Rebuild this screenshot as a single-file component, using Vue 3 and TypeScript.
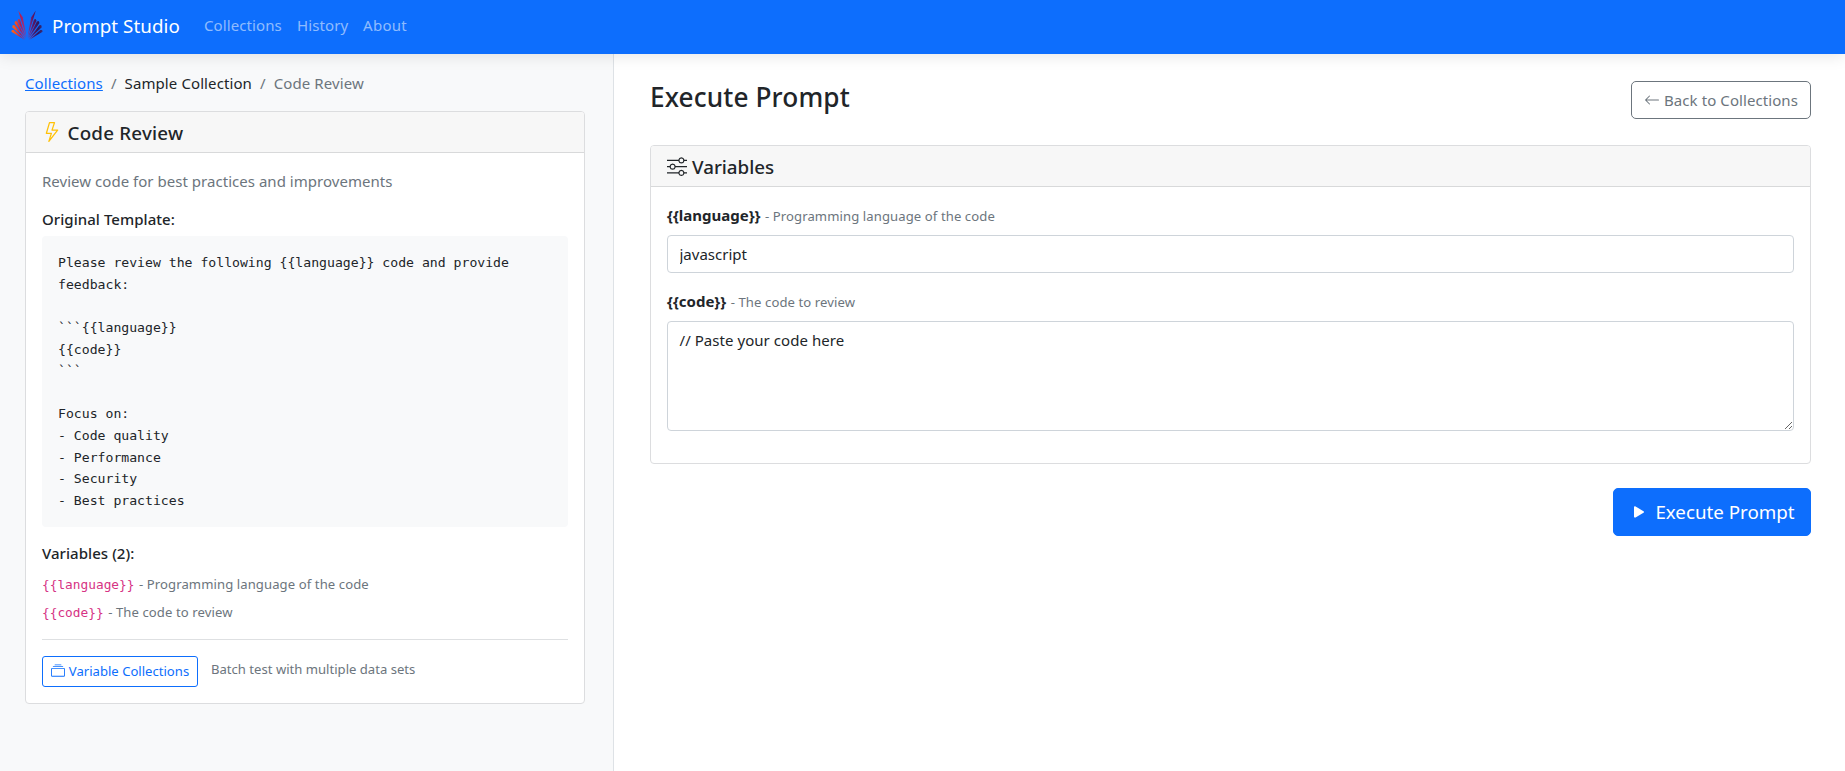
<script setup lang="ts">
import { ref } from 'vue'

interface Variable {
  name: string
  description: string
}

const navLinks: string[] = ['Collections', 'History', 'About']

const variables: Variable[] = [
  { name: 'language', description: 'Programming language of the code' },
  { name: 'code', description: 'The code to review' },
]

const token = (name: string): string => '{{' + name + '}}'

const template = [
  'Please review the following {{language}} code and provide feedback:',
  '',
  '```{{language}}',
  '{{code}}',
  '```',
  '',
  'Focus on:',
  '- Code quality',
  '- Performance',
  '- Security',
  '- Best practices',
].join('\n')

const language = ref('javascript')
const code = ref('// Paste your code here')
</script>

<template>
  <div class="page">
    <nav class="navbar">
      <a class="brand">
        <svg class="logo" viewBox="0 0 32 32" width="32" height="32">
          <defs>
            <linearGradient id="fan" gradientUnits="userSpaceOnUse" x1="0" y1="0" x2="32" y2="0">
              <stop offset="0" stop-color="#ff6a13" />
              <stop offset="0.16" stop-color="#f04a28" />
              <stop offset="0.3" stop-color="#b01c58" />
              <stop offset="0.5" stop-color="#8a3a9a" />
              <stop offset="0.7" stop-color="#5a1462" />
              <stop offset="0.85" stop-color="#2c1660" />
              <stop offset="1" stop-color="#3a2f7a" />
            </linearGradient>
          </defs>
          <g fill="url(#fan)">
            <path d="M14 30 0.4 21.8 0.9 19.9 2.6 20.1Z" />
            <path d="M14.4 29.4 1.2 17.3 1.8 15.1 3.6 15.2Z" />
            <path d="M14.8 28.8 3.5 13.1 4.3 10.9 6.1 11.4Z" />
            <path d="M15.2 28.2 6.5 10.7 7.3 8.9 8.9 9.6Z" />
            <path d="M15.6 27.5 9.7 8.8 7.2 0.6 11.8 7.2Z" />
            <path d="M18 30 31.6 21.8 31.1 19.9 29.4 20.1Z" />
            <path d="M17.6 29.4 30.8 17.3 30.2 15.1 28.4 15.2Z" />
            <path d="M17.2 28.8 28.5 13.1 27.7 10.9 25.9 11.4Z" />
            <path d="M16.8 28.2 25.5 10.7 24.7 8.9 23.1 9.6Z" />
            <path d="M16.4 27.5 22.3 8.8 24.8 0.6 20.2 7.2Z" />
          </g>
        </svg>
        <span class="brand-name">Prompt Studio</span>
      </a>
      <a v-for="(link, i) in navLinks" :key="link" class="nav-link" :class="`nav-${i}`">{{ link }}</a>
    </nav>

    <div class="content">
      <aside class="sidebar">
        <div class="breadcrumb">
          <a class="crumb-link">Collections</a>
          <span class="sep">/</span>
          <span class="crumb-mid">Sample Collection</span>
          <span class="sep">/</span>
          <span class="crumb-end">Code Review</span>
        </div>

        <section class="card">
          <header class="card-header">
            <svg class="bolt" viewBox="0 0 16 16" width="20" height="20" fill="currentColor">
              <path d="M5.52.359A.5.5 0 0 1 6 0h4a.5.5 0 0 1 .474.658L8.694 6H12.5a.5.5 0 0 1 .395.807l-7 9a.5.5 0 0 1-.873-.454L6.823 9.5H3.5a.5.5 0 0 1-.48-.641zM6.374 1 4.168 8.5H7.5a.5.5 0 0 1 .478.647L6.78 13.04 11.478 7H8a.5.5 0 0 1-.474-.658L9.306 1z" />
            </svg>
            <h5 class="title-review">Code Review</h5>
          </header>
          <div class="card-body">
            <p class="description">Review code for best practices and improvements</p>
            <h6 class="h-template">Original Template:</h6>
            <pre class="template">{{ template }}</pre>
            <h6 class="h-vars">Variables (2):</h6>
            <div v-for="v in variables" :key="v.name" class="var-row">
              <code>{{ token(v.name) }}</code>
              <small> - {{ v.description }}</small>
            </div>
            <hr />
            <div class="actions">
              <button class="btn btn-small">
                <svg viewBox="0 0 16 16" width="14" height="14" fill="currentColor">
                  <path d="M2.5 3.5a.5.5 0 0 1 0-1h11a.5.5 0 0 1 0 1zm2-2a.5.5 0 0 1 0-1h7a.5.5 0 0 1 0 1zM0 13a1.5 1.5 0 0 0 1.5 1.5h13A1.5 1.5 0 0 0 16 13V6a1.5 1.5 0 0 0-1.5-1.5h-13A1.5 1.5 0 0 0 0 6zm1.5.5A.5.5 0 0 1 1 13V6a.5.5 0 0 1 .5-.5h13a.5.5 0 0 1 .5.5v7a.5.5 0 0 1-.5.5z" />
                </svg>
                <span>Variable Collections</span>
              </button>
              <small class="hint">Batch test with multiple data sets</small>
            </div>
          </div>
        </section>
      </aside>

      <main class="main">
        <div class="heading">
          <h3>Execute Prompt</h3>
          <button class="btn btn-back">
            <svg viewBox="0 0 16 16" width="16" height="16" fill="currentColor">
              <path fill-rule="evenodd" d="M15 8a.5.5 0 0 0-.5-.5H2.707l3.147-3.146a.5.5 0 1 0-.708-.708l-4 4a.5.5 0 0 0 0 .708l4 4a.5.5 0 0 0 .708-.708L2.707 8.5H14.5A.5.5 0 0 0 15 8" />
            </svg>
            <span>Back to Collections</span>
          </button>
        </div>

        <section class="card">
          <header class="card-header">
            <svg class="sliders" viewBox="0 0 16 16" width="20" height="20" fill="currentColor">
              <path fill-rule="evenodd" d="M11.5 2a1.5 1.5 0 1 0 0 3 1.5 1.5 0 0 0 0-3M9.05 3a2.5 2.5 0 0 1 4.9 0H16v1h-2.05a2.5 2.5 0 0 1-4.9 0H0V3zM4.5 7a1.5 1.5 0 1 0 0 3 1.5 1.5 0 0 0 0-3M2.05 8a2.5 2.5 0 0 1 4.9 0H16v1H6.95a2.5 2.5 0 0 1-4.9 0H0V8zm9.45 4a1.5 1.5 0 1 0 0 3 1.5 1.5 0 0 0 0-3m-2.45 1a2.5 2.5 0 0 1 4.9 0H16v1h-2.05a2.5 2.5 0 0 1-4.9 0H0v-1z" />
            </svg>
            <h5 class="title-vars">Variables</h5>
          </header>
          <div class="card-body">
            <div class="field">
              <label><strong>{{ token(variables[0].name) }}</strong><small> - {{ variables[0].description }}</small></label>
              <input v-model="language" type="text" />
            </div>
            <div class="field">
              <label><strong>{{ token(variables[1].name) }}</strong><small> - {{ variables[1].description }}</small></label>
              <textarea v-model="code" rows="4" spellcheck="false"></textarea>
            </div>
          </div>
        </section>

        <div class="submit">
          <button class="btn btn-run">
            <svg viewBox="0 0 16 16" width="20" height="20" fill="currentColor">
              <path d="m11.596 8.697-6.363 3.692c-.54.313-1.233-.066-1.233-.697V4.308c0-.63.692-1.01 1.233-.696l6.363 3.692a.802.802 0 0 1 0 1.393" />
            </svg>
            <span>Execute Prompt</span>
          </button>
        </div>
      </main>
    </div>
  </div>
</template>

<style>
body {
  margin: 0;
  background: #fff;
}
</style>

<style scoped>
.page,
.page * {
  box-sizing: border-box;
}

.page {
  display: flex;
  flex-direction: column;
  height: 771px;
  overflow: hidden;
  font-family: 'Noto Sans', 'Open Sans', sans-serif;
  font-size: 15px;
  line-height: 24px;
  color: #212529;
}

svg {
  display: block;
  flex: none;
}

h3,
h5,
h6,
p,
pre {
  margin: 0;
  font-weight: 550;
}

p,
pre {
  font-weight: 400;
}

button,
input,
textarea {
  font: inherit;
  color: inherit;
}

.navbar {
  position: relative;
  z-index: 1;
  display: flex;
  align-items: center;
  flex: none;
  height: 54px;
  padding: 0 11px 3px;
  background: #0d6efd;
  box-shadow: 0 2px 15px rgba(0, 0, 0, 0.1);
}

.brand {
  display: flex;
  align-items: center;
  gap: 9px;
  width: 193px;
  color: #fff;
  font-size: 18.75px;
  letter-spacing: 0.05px;
  line-height: 30px;
}

.nav-link {
  padding-bottom: 1px;
  color: rgba(255, 255, 255, 0.55);
  letter-spacing: 0.1px;
  white-space: nowrap;
}

.nav-0 {
  width: 93px;
}

.nav-1 {
  width: 66px;
}

.nav-2 {
  letter-spacing: 0.3px;
}

.content {
  display: flex;
  flex: 1;
  min-height: 0;
}

.sidebar {
  flex: none;
  width: 614px;
  padding: 17px 28px 0 25px;
  background: #f8f9fa;
  border-right: 1px solid #dee2e6;
}

.breadcrumb {
  display: flex;
  gap: 8px;
  margin-bottom: 16px;
  letter-spacing: 0.1px;
}

.crumb-link {
  color: #0d6efd;
  text-decoration: underline;
}

.sep,
.crumb-end {
  color: #6c757d;
}

.card {
  background: #fff;
  border: 1px solid #dcdddf;
  border-radius: 4px;
}

.card-header {
  display: flex;
  align-items: center;
  height: 41px;
  padding: 0 16px;
  background: #f7f7f7;
  border-bottom: 1px solid #d8d9da;
  border-radius: 3px 3px 0 0;
}

.card-header h5 {
  padding-top: 1px;
  font-size: 18.75px;
  line-height: 24px;
}

.title-review {
  letter-spacing: 0.22px;
}

.bolt {
  margin-right: 5.5px;
  color: #ffc107;
}

.sliders {
  margin-right: 5px;
}

.card-body {
  padding: 16px;
}

.description {
  margin-bottom: 17px;
  color: #6c757d;
  letter-spacing: 0.03px;
}

h6 {
  margin-bottom: 7px;
  font-size: 15px;
  line-height: 19.2px;
  letter-spacing: 0.05px;
}

.template {
  margin-bottom: 17px;
  padding: 16px;
  background: #f8f9fa;
  border-radius: 4px;
  font-family: 'DejaVu Sans Mono', 'Liberation Mono', monospace;
  font-size: 13.15px;
  line-height: 21.6px;
  white-space: pre-wrap;
}

.var-row {
  height: 24px;
  margin-bottom: 4px;
}

code {
  color: #d63384;
  font-family: 'DejaVu Sans Mono', 'Liberation Mono', monospace;
  font-size: 12.8px;
}

small {
  margin-left: 1px;
  font-size: 13.1px;
  color: #6c757d;
  letter-spacing: 0.09px;
}

hr {
  margin: 16px 0;
  border: 0;
  border-top: 1px solid #dee0e2;
}

.actions {
  display: flex;
  align-items: center;
}

.btn {
  display: flex;
  align-items: center;
  justify-content: center;
  padding: 0;
  background: transparent;
  border: 1px solid;
  border-radius: 5px;
  white-space: nowrap;
}

.btn-small {
  gap: 4px;
  width: 156px;
  height: 31px;
  margin-right: 12px;
  border-radius: 3px;
  color: #0d6efd;
  font-size: 13.1px;
}

.hint {
  margin-top: -4px;
  letter-spacing: 0;
}

.main {
  flex: 1;
  padding: 27px 34px 0 36px;
}

.heading {
  display: flex;
  align-items: flex-start;
  justify-content: space-between;
  height: 64px;
}

.heading h3 {
  font-size: 26.2px;
  line-height: 33px;
  letter-spacing: 0.13px;
}

.btn-back {
  gap: 4px;
  width: 180px;
  height: 38px;
  color: #6c757d;
  letter-spacing: 0.08px;
}

.field {
  margin-bottom: 16px;
}

.field label {
  display: block;
  height: 24px;
  margin-bottom: 8px;
}

strong {
  font-weight: 700;
}

input,
textarea {
  display: block;
  width: 100%;
  padding: 6px 11.5px;
  background: #fff;
  border: 1px solid #ced4da;
  border-radius: 4px;
  outline: none;
}

input {
  height: 38px;
  padding-bottom: 7px;
}

textarea {
  height: 110px;
  letter-spacing: 0.05px;
  resize: vertical;
}

.submit {
  display: flex;
  justify-content: flex-end;
  margin-top: 24px;
}

.btn-run {
  gap: 6px;
  width: 198px;
  height: 48px;
  background: #0d6efd;
  border-color: #0d6efd;
  color: #fff;
  font-size: 18.75px;
}
</style>
